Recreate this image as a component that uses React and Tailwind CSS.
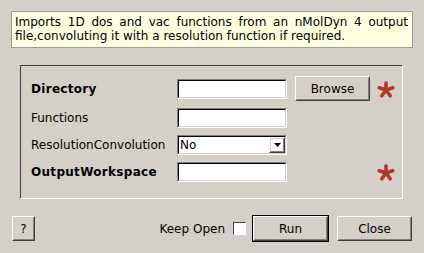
import React from 'react';

const Sunken = ({ className = '', children }) => (
  <div className={`border border-t-[#808080] border-l-[#808080] border-b-white border-r-white ${className}`}>
    <div className="w-full h-full border border-t-[#000] border-l-[#000] border-b-[#d4d0c8] border-r-[#d4d0c8] bg-white flex items-center">
      {children}
    </div>
  </div>
);

const Button = ({ className = '', children, isDefault }) => {
  const inner = (
    <div className="w-full h-full border border-t-white border-l-white border-b-[#404040] border-r-[#404040]">
      <div className="w-full h-full border border-t-[#d4d0c8] border-l-[#d4d0c8] border-b-[#808080] border-r-[#808080] flex items-center justify-center">
        {children}
      </div>
    </div>
  );
  if (isDefault) {
    return <div className={`border border-black ${className}`}>{inner}</div>;
  }
  return <div className={className}>{inner}</div>;
};

const Star = () => (
  <svg width="18" height="18" viewBox="-9 -9 18 18" className="shrink-0">
    <g stroke="#b3362b" strokeWidth="3.6" strokeLinecap="round">
      <line x1="0" y1="0" x2="0" y2="-7" />
      <line x1="0" y1="0" x2="6.8" y2="-2.2" />
      <line x1="0" y1="0" x2="-6.8" y2="-2.2" />
      <line x1="0" y1="0" x2="4.2" y2="5.8" />
      <line x1="0" y1="0" x2="-4.2" y2="5.8" />
    </g>
  </svg>
);

export default function App() {
  return (
    <div className="w-[424px] h-[253px] bg-[#d4d0c8] text-[12px] text-black font-['DejaVu_Sans',sans-serif] overflow-hidden">
      <div className="flex flex-col">
        <div className="mx-[11px] mt-[11px] h-[37px] border border-[#9b9b9b] bg-[#ffffe1] pl-[3px] pr-[4px] pt-[3px] leading-[14px] text-justify">
          Imports 1D dos and vac functions from an nMolDyn 4 output file,convoluting it with a resolution function if required.
        </div>

        <div className="ml-[20px] mt-[17px] w-[383px] h-[134px] border border-t-[#404040] border-l-[#404040] border-b-white border-r-white pt-[10px] pl-[10px]">
          <div className="flex items-center h-[25px]">
            <span className="w-[146px] font-bold tracking-[0.3px]">Directory</span>
            <Sunken className="w-[110px] h-[20px]" />
            <Button className="ml-[8px] w-[75px] h-[25px]">Browse</Button>
            <div className="ml-[7px] mt-[2px]"><Star /></div>
          </div>
          <div className="flex items-center h-[20px] mt-[7px]">
            <span className="w-[146px]">Functions</span>
            <Sunken className="w-[110px] h-[20px]" />
          </div>
          <div className="flex items-center h-[20px] mt-[7px]">
            <span className="w-[146px]">ResolutionConvolution</span>
            <Sunken className="w-[110px] h-[20px]">
              <span className="pl-[1px] flex-1">No</span>
              <Button className="w-[16px] h-[16px]">
                <svg width="7" height="4" viewBox="0 0 7 4"><path d="M0 0H7L3.5 4Z" fill="#000" /></svg>
              </Button>
            </Sunken>
          </div>
          <div className="flex items-center h-[20px] mt-[7px]">
            <span className="w-[146px] font-bold tracking-[0.3px]">OutputWorkspace</span>
            <Sunken className="w-[110px] h-[20px]" />
            <div className="ml-[90px] mt-[2px]"><Star /></div>
          </div>
        </div>

        <div className="flex items-center h-[27px] mt-[16px] pl-[12px] pr-[12px]">
          <Button className="w-[23px] h-[25px]">?</Button>
          <div className="flex-1" />
          <span>Keep Open</span>
          <div className="ml-[8px] w-[13px] h-[13px] border border-t-[#404040] border-l-[#404040] border-b-white border-r-white bg-white" />
          <Button isDefault className="ml-[6px] w-[77px] h-[27px]">Run</Button>
          <Button className="ml-[8px] w-[75px] h-[25px]">Close</Button>
        </div>
      </div>
    </div>
  );
}
